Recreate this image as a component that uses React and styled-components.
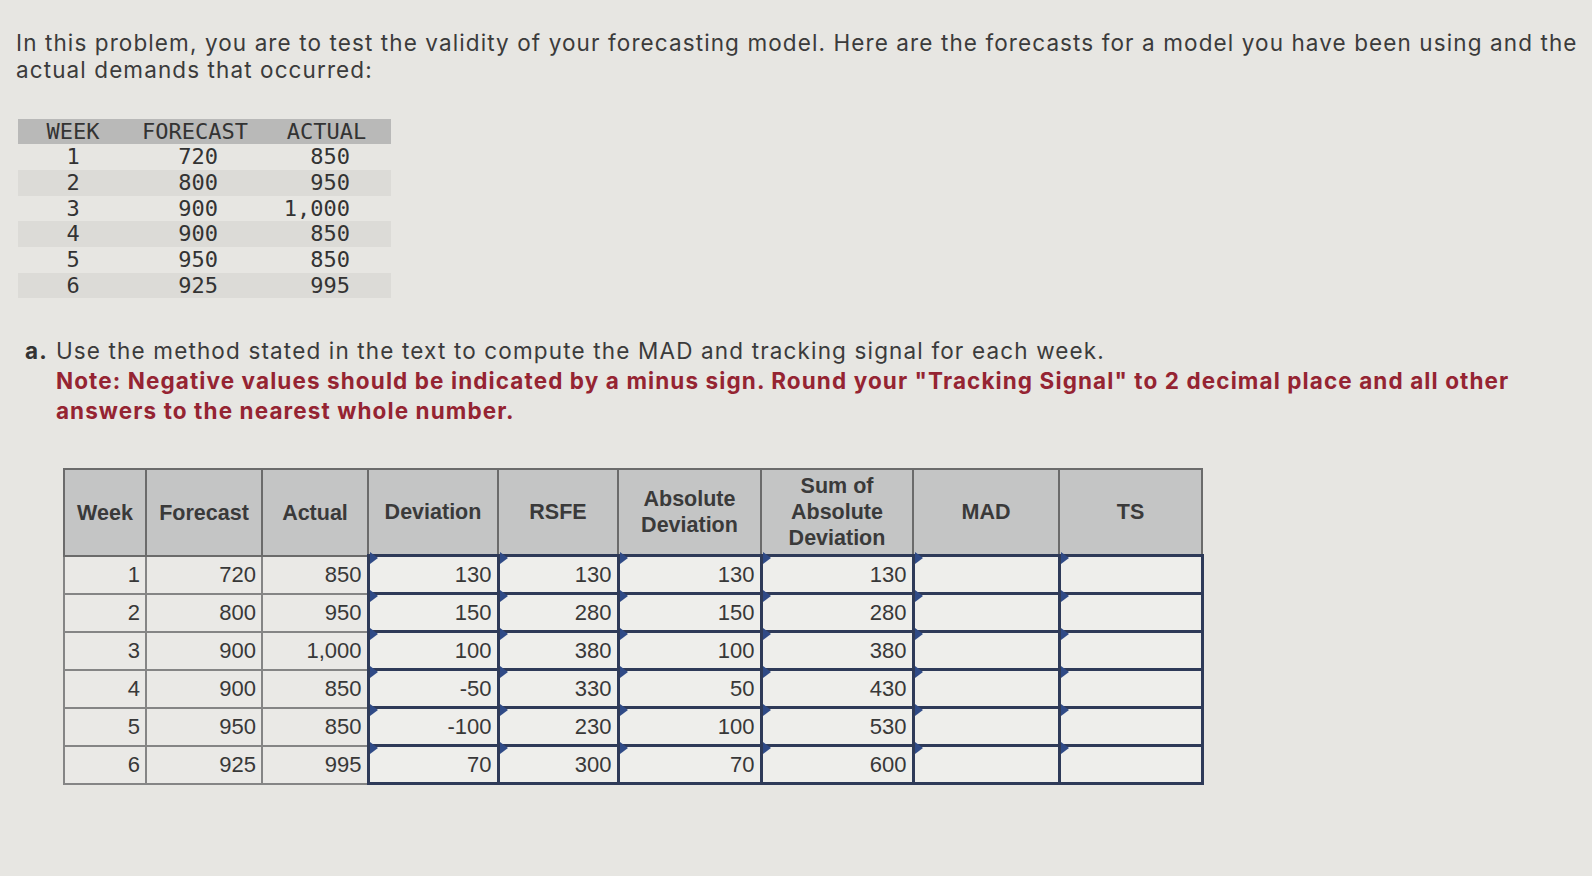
import styled, { createGlobalStyle } from "styled-components";

const GlobalStyle = createGlobalStyle`
  html, body {
    margin: 0;
    background: #e7e6e2;
  }
  body {
    font-family: "Liberation Sans", Arial, sans-serif;
    color: #3a3a3a;
  }
`;

const Page = styled.div`
  padding: 29px 0 0 16px;
  width: 1576px;
  height: 847px;
  overflow: hidden;
`;

const Intro = styled.p`
  margin: 0;
  font-family: Inter, "Open Sans", sans-serif;
  font-size: 22.5px;
  line-height: 27.3px;
  letter-spacing: 1.1px;
  color: #3b3b3b;
  white-space: nowrap;
`;

const Given = styled.div`
  margin: 35px 0 0 2px;
  width: 373px;
  font-family: "DejaVu Sans Mono", monospace;
  font-size: 22px;
  color: #333;
`;

const GivenRow = styled.div`
  display: grid;
  grid-template-columns: 110px 134px 129px;
  height: 25.7px;
  line-height: 25.7px;
  background: ${(p) => (p.$head ? "#b9b9b8" : p.$odd ? "#dcdbd7" : "transparent")};
`;

const GivenCell = styled.span`
  text-align: ${(p) => (p.$center ? "center" : "right")};
  padding-right: ${(p) => p.$pad || 0}px;
`;

const Part = styled.div`
  margin: 38px 0 0 9px;
  display: flex;
  gap: 8px;
  font-family: Inter, "Open Sans", sans-serif;
  font-size: 22.5px;
  line-height: 30px;
  letter-spacing: 1.15px;
  white-space: nowrap;
`;

const Letter = styled.span`
  font-weight: 700;
  color: #333;
`;

const PartText = styled.div`
  color: #3b3b3b;
`;

const Note = styled.div`
  font-weight: 700;
  letter-spacing: 1.1px;
  color: #952432;
`;

const Table = styled.table`
  margin: 42px 0 0 47px;
  border-collapse: collapse;
  table-layout: fixed;
  font-size: 22px;
  color: #383838;
`;

const Th = styled.th`
  width: ${(p) => p.$w}px;
  height: 84px;
  padding: 0;
  background: #c4c5c5;
  border: 2px solid #6b6b6b;
  font-size: 21.5px;
  font-weight: 700;
  line-height: 26px;
  color: #3a3a3a;
`;

const Td = styled.td`
  position: relative;
  height: 35px;
  padding: 0 5px 0 0;
  text-align: right;
  background: ${(p) => (p.$input ? "#eeeeeb" : "#eae9e6")};
  border: ${(p) => (p.$input ? "3px solid #2e3a58" : "2px solid #858585")};

  ${(p) =>
    p.$input &&
    `
    &::before {
      content: "";
      position: absolute;
      top: 0;
      left: 0;
      border-top: 6px solid transparent;
      border-bottom: 6px solid transparent;
      border-left: 8px solid #2f4a86;
      transform: translateY(-5px);
    }
  `}
`;

const given = [
  [1, 720, "850"],
  [2, 800, "950"],
  [3, 900, "1,000"],
  [4, 900, "850"],
  [5, 950, "850"],
  [6, 925, "995"],
];

const rows = [
  [1, 720, "850", 130, 130, 130, 130],
  [2, 800, "950", 150, 280, 150, 280],
  [3, 900, "1,000", 100, 380, 100, 380],
  [4, 900, "850", -50, 330, 50, 430],
  [5, 950, "850", -100, 230, 100, 530],
  [6, 925, "995", 70, 300, 70, 600],
];

const heads = [
  ["Week", 80],
  ["Forecast", 114],
  ["Actual", 104],
  ["Deviation", 128],
  ["RSFE", 118],
  [<>Absolute<br />Deviation</>, 141],
  [<>Sum of<br />Absolute<br />Deviation</>, 150],
  ["MAD", 144],
  ["TS", 141],
];

export default function App() {
  return (
    <Page>
      <GlobalStyle />
      <Intro>
        In this problem, you are to test the validity of your forecasting model. Here are the forecasts for a model you have been using and the
        <br />
        actual demands that occurred:
      </Intro>

      <Given>
        <GivenRow $head>
          <GivenCell $center>WEEK</GivenCell>
          <GivenCell $center>FORECAST</GivenCell>
          <GivenCell $center>ACTUAL</GivenCell>
        </GivenRow>
        {given.map(([w, f, a], i) => (
          <GivenRow key={w} $odd={i % 2 === 1}>
            <GivenCell $center>{w}</GivenCell>
            <GivenCell $pad={44}>{f}</GivenCell>
            <GivenCell $pad={41}>{a}</GivenCell>
          </GivenRow>
        ))}
      </Given>

      <Part>
        <Letter>a.</Letter>
        <PartText>
          Use the method stated in the text to compute the MAD and tracking signal for each week.
          <Note>
            Note: Negative values should be indicated by a minus sign. Round your "Tracking Signal" to 2 decimal place and all other
            <br />
            answers to the nearest whole number.
          </Note>
        </PartText>
      </Part>

      <Table>
        <thead>
          <tr>
            {heads.map(([label, w], i) => (
              <Th key={i} $w={w}>{label}</Th>
            ))}
          </tr>
        </thead>
        <tbody>
          {rows.map((r) => (
            <tr key={r[0]}>
              <Td>{r[0]}</Td>
              <Td>{r[1]}</Td>
              <Td>{r[2]}</Td>
              <Td $input>{r[3]}</Td>
              <Td $input>{r[4]}</Td>
              <Td $input>{r[5]}</Td>
              <Td $input>{r[6]}</Td>
              <Td $input />
              <Td $input />
            </tr>
          ))}
        </tbody>
      </Table>
    </Page>
  );
}
